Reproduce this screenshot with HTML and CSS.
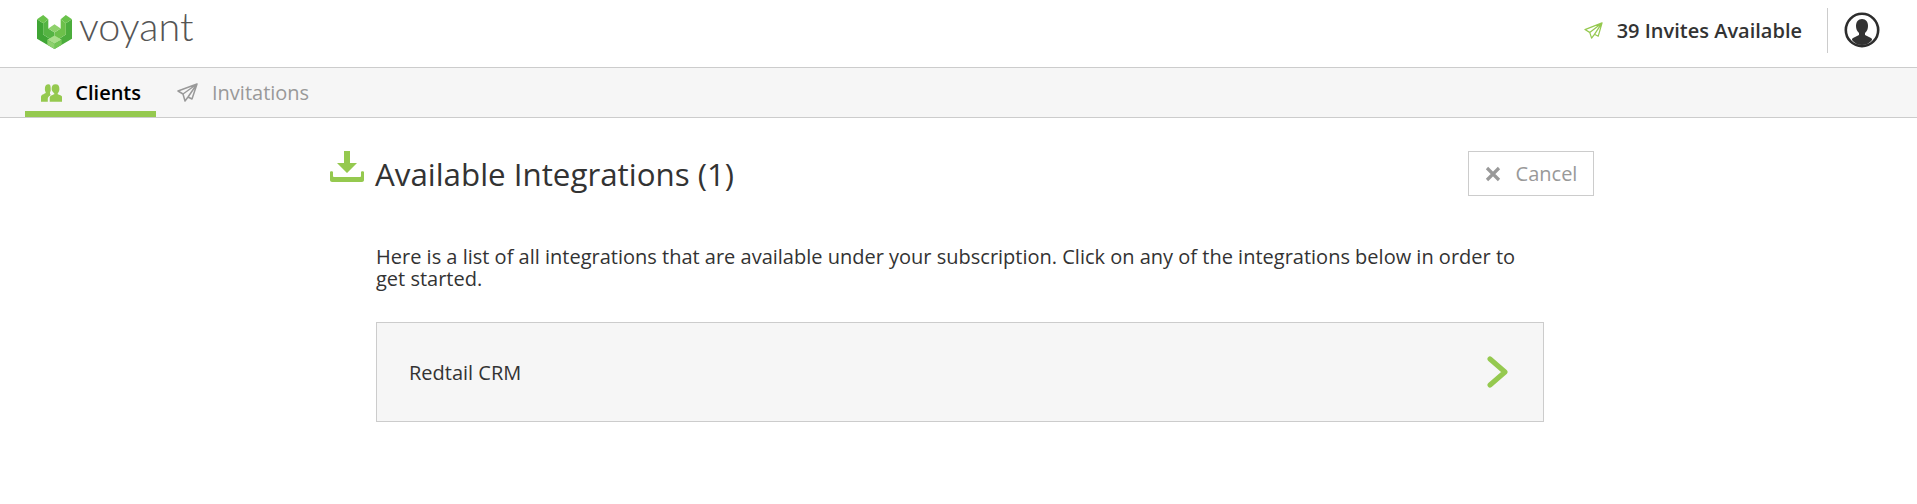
FILE: index.html
```html
<!DOCTYPE html>
<html lang="en">
<head>
  <meta charset="UTF-8" />
  <title>Voyant</title>
  <link rel="stylesheet" href="styles.css">
</head>
<body>
  <!-- Top Header -->
  <header class="top-bar">
    <div class="logo">
      <svg class="logo-mark" viewBox="0 0 34 33" width="35" height="34">
        <path fill="#3fa535" d="M0 4l6 4v11l11 7v7L0 23z"/>
        <path fill="#55b443" d="M6 8l5-4v9l6 4v9L6 19z"/>
        <path fill="#4bad3c" d="M34 4l-6 4v11l-11 7v7l17-10z"/>
        <path fill="#6cc04a" d="M28 8l-5-4v9l-6 4v9l11-7z"/>
        <path fill="#69c24a" d="M0 4l6-4 5 4-5 4z"/>
        <path fill="#69c24a" d="M23 4l5-4 6 4-6 4z"/>
        <path fill="#8fd16c" d="M11 13l6-4 6 4-6 4z"/>
        <path fill="#a9de8a" d="M10 24l7-4 7 4-7 4z"/>
        <path fill="#8ed16e" d="M10 24l7 4v5l-7-4z"/>
        <path fill="#74c656" d="M24 24l-7 4v5l7-4z"/>
      </svg>
      <span class="logo-text">voyant</span>
    </div>
    <div class="top-actions">
      <div class="invites">
        <svg class="invites-icon" viewBox="0 0 20 20" width="19" height="19">
          <path fill="none" stroke="#95c94f" stroke-width="1.3" stroke-linejoin="round" d="M19 2L1 9l5 3 2 6 3-4 4 2zM19 2L6 12M19 2L11 14"/>
        </svg>
        <span>39 Invites Available</span>
      </div>
      <div class="user-box">
        <svg viewBox="0 0 36 36" width="36" height="36">
          <circle cx="18" cy="18" r="16.2" fill="#fff" stroke="#2d2d2d" stroke-width="2.6"/>
          <path fill="#333" d="M18 7c-4 0-6 3-6 7 0 3 1 5 3 7v2l-6 3c-1 1-1 1-1 2 2 3 6 5 10 5s8-2 10-5c0-1 0-1-1-2l-6-3v-2c2-2 3-4 3-7 0-4-2-7-6-7z"/>
        </svg>
      </div>
    </div>
  </header>

  <!-- Tabs -->
  <nav class="tab-bar">
    <a class="tab active" href="#">
      <svg class="tab-icon" viewBox="0 0 22 20" width="22" height="20">
        <path fill="#95c94f" d="M8 1c-3 0-4 2-4 5 0 2 1 3 1 4-2 1-5 2-5 4v5h7v-3c0-2 2-3 3-4-1-1-1-3 0-4V5C10 2 9 1 8 1z"/>
        <path fill="#95c94f" d="M15 1c3 0 4 2 4 5 0 2-1 3-2 5 1 1 5 1 5 4v4H9v-4c0-3 4-3 5-4-1-2-3-3-3-5 0-3 1-5 4-5z"/>
      </svg>
      Clients
    </a>
    <a class="tab" href="#">
      <svg class="tab-icon" viewBox="0 0 21 20" width="21" height="20">
        <path fill="none" stroke="#999" stroke-width="1.5" stroke-linejoin="round" d="M20 1L1 8l5 3 2 7 3-4 4 2zM20 1L6 11M20 1L11 14"/>
      </svg>
      Invitations
    </a>
  </nav>

  <!-- Integrations -->
  <main class="content">
    <div class="page-head">
      <div class="page-title">
        <svg class="title-icon" viewBox="0 0 34 32" width="34" height="32">
          <path fill="#95c94f" d="M14 0h6v12h7l-10 10L7 12h7z"/>
          <path fill="#95c94f" d="M0 21c0-1 3-1 3 0v4c0 .5.5 1 1 1h26c.5 0 1-.5 1-1v-4c0-1 3-1 3 0v8c0 1-1 2-2 2H2c-1 0-2-1-2-2z"/>
        </svg>
        <h1>Available Integrations (1)</h1>
      </div>
      <button class="cancel-btn">
        <svg viewBox="0 0 16 16" width="16" height="16">
          <path fill="none" stroke="#999" stroke-width="3.2" d="M2 2l12 12M14 2L2 14"/>
        </svg>
        Cancel
      </button>
    </div>
    <div class="body-text">
      <p>Here is a list of all integrations that are available under your subscription. Click on any of the integrations below in order to get started.</p>
      <a class="integration" href="#">
        <span>Redtail CRM</span>
        <svg viewBox="0 0 22 32" width="22" height="32">
          <path fill="none" stroke="#95c94f" stroke-width="5" stroke-linecap="round" stroke-linejoin="round" d="M3 3l15 13L3 29"/>
        </svg>
      </a>
    </div>
  </main>
</body>
</html>
```

FILE: styles.css
```css
/* Global Styles */
* {
  margin: 0;
  padding: 0;
  box-sizing: border-box;
}
body {
  font-family: 'Open Sans', sans-serif;
  color: #333;
  background: #fff;
}
a {
  text-decoration: none;
  color: inherit;
}

/* Top Header */
.top-bar {
  height: 68px;
  display: flex;
  justify-content: space-between;
  align-items: center;
  padding: 0 37px 7px 37px;
  border-bottom: 1px solid #ccc;
}
.logo {
  display: flex;
  align-items: center;
  gap: 7px;
  margin-top: 3px;
}
.logo-text {
  font-family: 'Lato', sans-serif;
  font-weight: 300;
  font-size: 39.5px;
  line-height: 40px;
  color: #555;
  margin-top: -11px;
}
.top-actions {
  display: flex;
  align-items: center;
}
.invites {
  display: flex;
  align-items: center;
  gap: 14px;
  font-size: 20px;
  font-weight: 600;
  color: #333;
  margin-right: 25px;
}
.user-box {
  height: 45px;
  padding-left: 16px;
  border-left: 1px solid #ccc;
  display: flex;
  align-items: center;
}

/* Tabs */
.tab-bar {
  height: 50px;
  display: flex;
  padding-left: 25px;
  background: #f6f6f6;
  border-bottom: 1px solid #ccc;
}
.tab {
  display: flex;
  align-items: center;
  gap: 14px;
  height: 49px;
  padding: 0 15px 0 16px;
  font-size: 20px;
  font-weight: 600;
  color: #999;
}
.tab:last-child {
  font-weight: 400;
  padding-left: 21px;
}
.tab.active {
  width: 131px;
  gap: 13px;
  color: #000;
  border-bottom: 6px solid #95c94f;
  padding-top: 6px;
}

/* Integrations */
.content {
  width: 1264px;
  margin-left: 330px;
}
.page-head {
  display: flex;
  justify-content: space-between;
  align-items: flex-start;
  padding-top: 32px;
}
.page-title {
  display: flex;
  align-items: flex-start;
  gap: 11px;
}
.page-title h1 {
  font-size: 31.3px;
  font-weight: 400;
  line-height: 41px;
  margin-top: 4px;
}
.title-icon {
  margin-top: 1px;
}
.cancel-btn {
  width: 126px;
  height: 45px;
  margin-top: 1px;
  font-family: inherit;
  font-size: 20px;
  color: #999;
  background: #fff;
  border: 1px solid #ccc;
  display: flex;
  align-items: center;
  justify-content: center;
  gap: 15px;
}
.body-text {
  width: 1168px;
  margin-left: 46px;
  margin-top: 50px;
}
.body-text p {
  font-size: 20px;
  line-height: 22px;
}
.integration {
  height: 100px;
  margin-top: 32px;
  padding: 0 34px 0 32px;
  display: flex;
  align-items: center;
  justify-content: space-between;
  font-size: 20px;
  background: #f6f6f6;
  border: 1px solid #ccc;
}
```
